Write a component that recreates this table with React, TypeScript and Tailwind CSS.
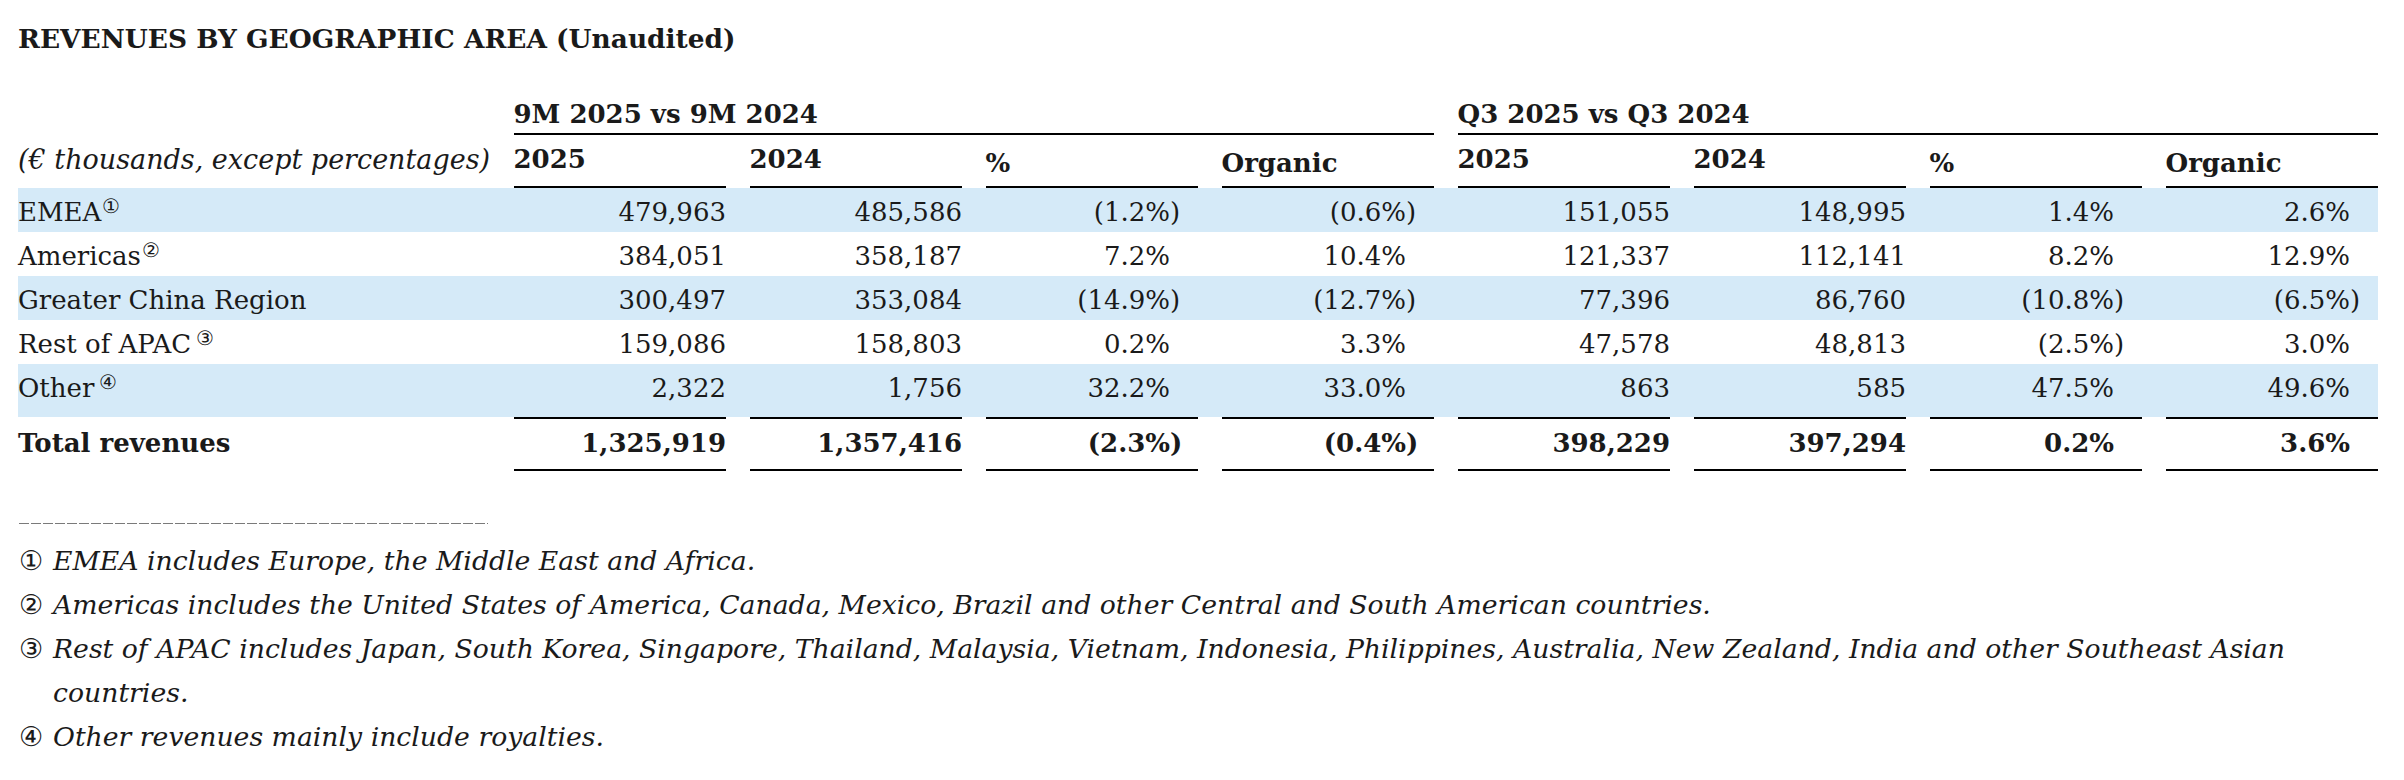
import React from "react"

interface Row {
  label: string
  note?: string
  gap?: boolean
  values: string[]
}

const rows: Row[] = [
  { label: "EMEA", note: "①", values: ["479,963", "485,586", "(1.2%)", "(0.6%)", "151,055", "148,995", "1.4%", "2.6%"] },
  { label: "Americas", note: "②", values: ["384,051", "358,187", "7.2%", "10.4%", "121,337", "112,141", "8.2%", "12.9%"] },
  { label: "Greater China Region", values: ["300,497", "353,084", "(14.9%)", "(12.7%)", "77,396", "86,760", "(10.8%)", "(6.5%)"] },
  { label: "Rest of APAC", note: "③", gap: true, values: ["159,086", "158,803", "0.2%", "3.3%", "47,578", "48,813", "(2.5%)", "3.0%"] },
  { label: "Other", note: "④", gap: true, values: ["2,322", "1,756", "32.2%", "33.0%", "863", "585", "47.5%", "49.6%"] },
]

const totals = ["1,325,919", "1,357,416", "(2.3%)", "(0.4%)", "398,229", "397,294", "0.2%", "3.6%"]

const footnotes = [
  { mark: "①", text: "EMEA includes Europe, the Middle East and Africa." },
  { mark: "②", text: "Americas includes the United States of America, Canada, Mexico, Brazil and other Central and South American countries." },
  {
    mark: "③",
    text: "Rest of APAC includes Japan, South Korea, Singapore, Thailand, Malaysia, Vietnam, Indonesia, Philippines, Australia, New Zealand, India and other Southeast Asian countries.",
  },
  { mark: "④", text: "Other revenues mainly include royalties." },
]

const grid = "grid grid-cols-[472px_repeat(8,212.5px)] gap-x-[23.5px]"

function Value({ value, index }: { value: string; index: number }) {
  const isPct = index % 4 >= 2
  const negative = value.startsWith("(")
  return (
    <div className={`text-right ${isPct ? "pr-[28px]" : ""}`}>
      {negative ? (
        <>
          {value.slice(0, -1)}
          <span className="inline-block w-0 text-left">)</span>
        </>
      ) : (
        value
      )}
    </div>
  )
}

export default function App() {
  return (
    <div className="w-[2404px] min-h-[780px] bg-white text-[#1a1a1a] font-['DejaVu_Serif',serif]">
      {/* Title */}
      <h1 className="pl-[18px] pt-[23px] text-[26.4px] leading-[32px] font-bold">
        REVENUES BY GEOGRAPHIC AREA (Unaudited)
      </h1>

      {/* Table */}
      <div className="mt-[45px] ml-[18px] w-[2360px] text-[26px] leading-[29px]">
        {/* Group headers */}
        <div className={grid}>
          <div />
          <div className="col-span-4 pb-[4px] border-b-2 border-black font-bold">9M 2025 vs 9M 2024</div>
          <div className="col-span-4 pb-[4px] border-b-2 border-black font-bold">Q3 2025 vs Q3 2024</div>
        </div>

        {/* Column headers */}
        <div className={grid}>
          <div className="pt-[10px] italic whitespace-nowrap text-[27px]">(€ thousands, except percentages)</div>
          {["2025", "2024", "%", "Organic", "2025", "2024", "%", "Organic"].map((h, i) => (
            <div
              key={i}
              className={`border-b-2 border-black font-bold ${i % 4 >= 2 ? "pt-[14px] pb-[8px]" : "pt-[10px] pb-[12px]"}`}
            >
              {h}
            </div>
          ))}
        </div>

        {/* Data rows */}
        {rows.map((row, r) => (
          <div
            key={row.label}
            className={`${grid} pt-[10px] ${r === rows.length - 1 ? "h-[53px]" : "h-[44px]"} ${r % 2 === 0 ? "bg-[#d5eaf8]" : ""}`}
          >
            <div className="whitespace-nowrap">
              {row.label}
              {row.note && (
                <span className={`inline-block align-top text-[20px] leading-[20px] -mt-[2px] ${row.gap ? "ml-[5px]" : "ml-[1px]"}`}>
                  {row.note}
                </span>
              )}
            </div>
            {row.values.map((v, i) => (
              <Value key={i} value={v} index={i} />
            ))}
          </div>
        ))}

        {/* Total */}
        <div className={`${grid} font-bold`}>
          <div className="pt-[12px]">Total revenues</div>
          {totals.map((v, i) => (
            <div key={i} className="border-t-2 border-b-2 border-black pt-[10px] pb-[11px]">
              <Value value={v} index={i} />
            </div>
          ))}
        </div>
      </div>

      {/* Footnotes */}
      <div className="mt-[52px] ml-[19px] h-px w-[469px] bg-[repeating-linear-gradient(90deg,#7a7a7a_0_10px,transparent_10px_12px)]" />
      <div className="mt-[15px] pl-[19px] pr-[60px] text-[26.7px] leading-[44px] italic">
        {footnotes.map((f) => (
          <div key={f.mark} className="flex">
            <span className="w-[34px] shrink-0 not-italic text-[27px]">{f.mark}</span>
            <span>{f.text}</span>
          </div>
        ))}
      </div>
    </div>
  )
}
